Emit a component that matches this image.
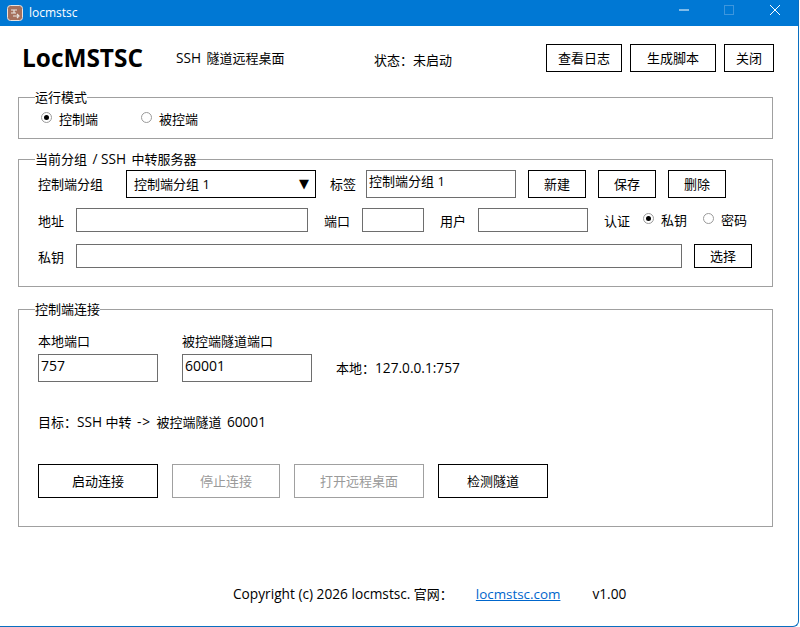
<script>
  let mode = 'client';
  let auth = 'key';
</script>

<div class="window">
  <div class="titlebar">
    <svg class="appicon" width="16" height="16" viewBox="0 0 16 16">
      <rect x="0.5" y="0.5" width="15" height="15" rx="3" fill="#a5705c" stroke="#e8e2de" />
      <path d="M4 5h6M7 5v3M4 8h5M10 9l2 2-2 2M6 11h5" fill="none" stroke="#e9e6e2" stroke-width="1.2" />
    </svg>
    <span class="apptitle">locmstsc</span>
    <div class="controls">
      <svg width="12" height="12" viewBox="0 0 12 12" class="min"><path d="M1 6h10" stroke="#fff" /></svg>
      <svg width="12" height="12" viewBox="0 0 12 12" class="max"><rect x="1.5" y="1.5" width="9" height="9" fill="none" stroke="#3d96dd" /></svg>
      <svg width="12" height="12" viewBox="0 0 12 12" class="close"><path d="M1 1l10 10M11 1L1 11" stroke="#fff" /></svg>
    </div>
  </div>

  <div class="content">
    <header>
      <h1>LocMSTSC</h1>
      <span class="subtitle"><span class="lat">SSH</span> 隧道远程桌面</span>
      <span class="status">状态：未启动</span>
      <div class="header-actions">
        <button class="log">查看日志</button>
        <button class="script">生成脚本</button>
        <button class="exit">关闭</button>
      </div>
    </header>

    <fieldset class="mode">
      <legend>运行模式</legend>
      <div class="row">
        <label class="radio" class:on={mode === 'client'}><i></i>控制端</label>
        <label class="radio" class:on={mode === 'server'}><i></i>被控端</label>
      </div>
    </fieldset>

    <fieldset class="server">
      <legend>当前分组 <span class="lat ssh">/ SSH</span> 中转服务器</legend>
      <div class="row r1">
        <span class="l-group">控制端分组</span>
        <div class="combo"><span>控制端分组 1</span><b>▼</b></div>
        <span class="l-tag">标签</span>
        <div class="input tag">控制端分组 1</div>
        <button class="b58 new">新建</button>
        <button class="b58 save">保存</button>
        <button class="b58 del">删除</button>
      </div>
      <div class="row r2">
        <span class="l-short">地址</span>
        <div class="input addr"></div>
        <span class="l-port">端口</span>
        <div class="input port"></div>
        <span class="l-user">用户</span>
        <div class="input user"></div>
        <span class="l-auth">认证</span>
        <label class="radio" class:on={auth === 'key'}><i></i>私钥</label>
        <label class="radio" class:on={auth === 'pwd'}><i></i>密码</label>
      </div>
      <div class="row r3">
        <span class="l-short">私钥</span>
        <div class="input key"></div>
        <button class="pick">选择</button>
      </div>
    </fieldset>

    <fieldset class="conn">
      <legend>控制端连接</legend>
      <div class="ports">
        <div class="field">
          <span>本地端口</span>
          <div class="input local">757</div>
        </div>
        <div class="field">
          <span>被控端隧道端口</span>
          <div class="input tunnel">60001</div>
        </div>
        <span class="addr-info">本地：<span class="lat">127.0.0.1:757</span></span>
      </div>
      <div class="target">目标：<span class="lat">SSH</span> 中转 <span class="lat arrow">-&gt;</span> 被控端隧道 <span class="lat port-no">60001</span></div>
      <div class="row actions">
        <button class="start">启动连接</button>
        <button class="stop" disabled>停止连接</button>
        <button class="rdp" disabled>打开远程桌面</button>
        <button class="check">检测隧道</button>
      </div>
    </fieldset>

    <footer>
      <span><span class="lat">Copyright (c) 2026 locmstsc.</span> 官网：</span>
      <a href="#top">locmstsc.com</a>
      <span class="lat">v1.00</span>
    </footer>
  </div>
</div>

<style>
  :global(body) {
    margin: 0;
    background: #fff;
  }

  .window {
    width: 799px;
    height: 627px;
    box-sizing: border-box;
    border: solid #0a6fc0;
    border-width: 0 1px 1px 0;
    border-radius: 0 0 6px 0;
    overflow: hidden;
    font: 13px/18px "Open Sans", "Noto Sans CJK SC", sans-serif;
    color: #000;
    background: #fff;
  }

  .lat {
    font-size: 13.7px;
  }

  .titlebar {
    height: 26px;
    background: #0078d4;
    display: flex;
    align-items: center;
    padding-left: 7px;
    color: #fff;
    font-size: 12px;
  }

  .apptitle {
    margin-left: 6px;
  }

  .controls {
    margin-left: auto;
    display: flex;
    align-self: flex-start;
    margin-top: 4px;
    padding-right: 17px;
  }

  .max {
    margin-left: 33px;
  }

  .close {
    margin-left: 34px;
  }

  .content {
    padding: 18px 0 0 18px;
  }

  header {
    height: 28px;
    display: flex;
    align-items: center;
  }

  h1 {
    margin: 0 0 0 4px;
    width: 154px;
    font-size: 24.4px;
    font-weight: 700;
    font-family: "Open Sans", sans-serif;
  }

  .subtitle {
    width: 198px;
    margin-top: -1px;
  }

  .subtitle .lat {
    margin-right: 2px;
  }

  .status {
    margin-top: 3px;
  }

  .header-actions {
    margin-left: auto;
    margin-right: 24px;
    display: flex;
    gap: 8px;
  }

  button {
    box-sizing: border-box;
    font: inherit;
    color: #000;
    background: #fff;
    border: 1px solid #000;
    padding: 0;
    height: 28px;
  }

  button:disabled {
    color: #9a9a9a;
    border-color: #a0a0a0;
  }

  .log {
    width: 76px;
  }

  .script {
    width: 86px;
  }

  .exit {
    width: 50px;
  }

  fieldset {
    box-sizing: border-box;
    width: 755px;
    margin: 0;
    padding: 0 0 0 19px;
    border: 1px solid #a0a0a0;
  }

  legend {
    margin-left: -3px;
    padding: 0;
    line-height: 18px;
  }

  .ssh {
    margin: 0 2px;
  }

  .row {
    display: flex;
    align-items: center;
  }

  .mode {
    height: 51px;
    margin-top: 16px;
  }

  .mode .row {
    gap: 43px;
    margin: 4px 0 0 3px;
  }

  .radio {
    display: flex;
    align-items: center;
  }

  .radio i {
    box-sizing: border-box;
    width: 11px;
    height: 11px;
    margin-right: 7px;
    margin-top: -3px;
    border-radius: 50%;
    border: 1px solid #9a9a9a;
    background: #fff;
    display: flex;
    align-items: center;
    justify-content: center;
  }

  .radio.on i::after {
    content: "";
    width: 5px;
    height: 5px;
    border-radius: 50%;
    background: #000;
  }

  .server {
    height: 137px;
    margin-top: 11px;
  }

  .r1 {
    height: 28px;
    margin-top: 2px;
  }

  .l-group {
    width: 88px;
  }

  .combo {
    box-sizing: border-box;
    width: 190px;
    height: 28px;
    border: 1px solid #000;
    display: flex;
    align-items: center;
    justify-content: space-between;
    padding: 0 6px 0 7px;
  }

  .combo b {
    font-weight: 400;
    font-size: 13px;
    font-family: "DejaVu Sans", sans-serif;
  }

  .l-tag {
    margin-left: 14px;
    width: 36px;
  }

  .input {
    box-sizing: border-box;
    border: 1px solid #6e6e6e;
    padding: 0 2px;
    height: 24px;
    background: #fff;
  }

  .tag {
    width: 150px;
    height: 28px;
    line-height: 20px;
    margin-right: 12px;
  }

  .b58 {
    width: 58px;
    margin-right: 12px;
  }

  .r2 {
    height: 24px;
    margin-top: 10px;
  }

  .r2 > span,
  .r3 > span {
    margin-top: 2px;
  }

  .l-short {
    width: 38px;
  }

  .addr {
    width: 232px;
  }

  .l-port {
    margin-left: 16px;
    width: 38px;
  }

  .port {
    width: 62px;
  }

  .l-user {
    margin-left: 16px;
    width: 38px;
  }

  .user {
    width: 110px;
  }

  .l-auth {
    margin-left: 16px;
    width: 39px;
  }

  .r2 .radio {
    width: 60px;
  }

  .r3 {
    height: 24px;
    margin-top: 12px;
  }

  .key {
    width: 606px;
  }

  .pick {
    width: 58px;
    height: 24px;
    margin-left: 12px;
  }

  .conn {
    height: 227px;
    margin-top: 13px;
  }

  .ports {
    display: flex;
    align-items: flex-end;
    margin-top: 14px;
  }

  .field {
    display: flex;
    flex-direction: column;
    gap: 4px;
    margin-right: 24px;
  }

  .local,
  .tunnel {
    height: 28px;
    line-height: 22px;
    font-size: 14px;
  }

  .local {
    width: 120px;
  }

  .tunnel {
    width: 130px;
  }

  .addr-info {
    height: 23px;
  }

  .target {
    margin-top: 31px;
  }

  .arrow {
    margin: 0 2px;
    letter-spacing: 1px;
  }

  .port-no {
    margin-left: 2px;
  }

  .actions {
    margin-top: 33px;
    gap: 14px;
  }

  .actions button {
    height: 34px;
  }

  .start {
    width: 120px;
  }

  .stop {
    width: 108px;
  }

  .rdp {
    width: 130px;
  }

  .check {
    width: 110px;
  }

  footer {
    display: flex;
    margin: 58px 0 0 215px;
  }

  footer a {
    margin-left: 23px;
    margin-right: 32px;
    font-size: 13.4px;
    color: #0066cc;
  }
</style>
